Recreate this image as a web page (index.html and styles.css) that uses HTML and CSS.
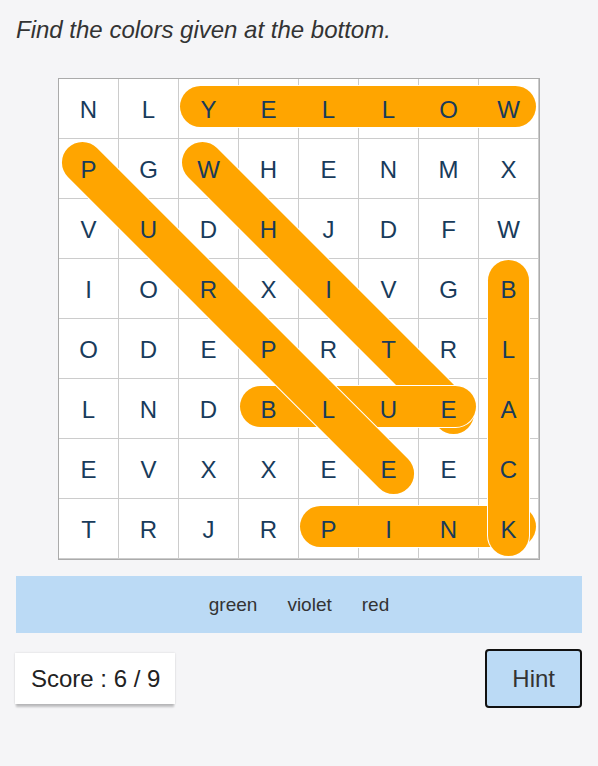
FILE: index.html
```html
<!DOCTYPE html>
<html lang="en">
<head>
<meta charset="utf-8">
<title>Word Search</title>
<link rel="stylesheet" href="styles.css">
</head>
<body>
<div class="page">
  <p class="title">Find the colors given at the bottom.</p>

  <div class="board">
    <div class="grid">
      <div class="cell"><span>N</span></div><div class="cell"><span>L</span></div><div class="cell"><span>Y</span></div><div class="cell"><span>E</span></div><div class="cell"><span>L</span></div><div class="cell"><span>L</span></div><div class="cell"><span>O</span></div><div class="cell"><span>W</span></div>
      <div class="cell"><span>P</span></div><div class="cell"><span>G</span></div><div class="cell"><span>W</span></div><div class="cell"><span>H</span></div><div class="cell"><span>E</span></div><div class="cell"><span>N</span></div><div class="cell"><span>M</span></div><div class="cell"><span>X</span></div>
      <div class="cell"><span>V</span></div><div class="cell"><span>U</span></div><div class="cell"><span>D</span></div><div class="cell"><span>H</span></div><div class="cell"><span>J</span></div><div class="cell"><span>D</span></div><div class="cell"><span>F</span></div><div class="cell"><span>W</span></div>
      <div class="cell"><span>I</span></div><div class="cell"><span>O</span></div><div class="cell"><span>R</span></div><div class="cell"><span>X</span></div><div class="cell"><span>I</span></div><div class="cell"><span>V</span></div><div class="cell"><span>G</span></div><div class="cell"><span>B</span></div>
      <div class="cell"><span>O</span></div><div class="cell"><span>D</span></div><div class="cell"><span>E</span></div><div class="cell"><span>P</span></div><div class="cell"><span>R</span></div><div class="cell"><span>T</span></div><div class="cell"><span>R</span></div><div class="cell"><span>L</span></div>
      <div class="cell"><span>L</span></div><div class="cell"><span>N</span></div><div class="cell"><span>D</span></div><div class="cell"><span>B</span></div><div class="cell"><span>L</span></div><div class="cell"><span>U</span></div><div class="cell"><span>E</span></div><div class="cell"><span>A</span></div>
      <div class="cell"><span>E</span></div><div class="cell"><span>V</span></div><div class="cell"><span>X</span></div><div class="cell"><span>X</span></div><div class="cell"><span>E</span></div><div class="cell"><span>E</span></div><div class="cell"><span>E</span></div><div class="cell"><span>C</span></div>
      <div class="cell"><span>T</span></div><div class="cell"><span>R</span></div><div class="cell"><span>J</span></div><div class="cell"><span>R</span></div><div class="cell"><span>P</span></div><div class="cell"><span>I</span></div><div class="cell"><span>N</span></div><div class="cell"><span>K</span></div>
    </div>
    <div class="mark" style="left:121px; top:7px; width:356px; height:41px;"></div>
    <div class="mark diag" style="left:269.15px; top:209.15px; width:396px;"></div>
    <div class="mark" style="left:181px; top:307px; width:236px; height:41px;"></div>
    <div class="mark diag" style="left:179.15px; top:239.15px; width:481px;"></div>
    <div class="mark" style="left:241px; top:427px; width:236px; height:41px;"></div>
    <div class="mark" style="left:429px; top:181px; width:41px; height:296px;"></div>
  </div>

  <div class="words">
    <span class="word">green</span>
    <span class="word">violet</span>
    <span class="word">red</span>
  </div>

  <div class="controls">
    <div class="score">Score : 6 / 9</div>
    <button class="hint" type="button">Hint</button>
  </div>
</div>
</body>
</html>
```

FILE: styles.css
```css
html, body {
  margin: 0;
  padding: 0;
  background: #f5f5f7;
}

.page {
  padding: 16px;
  font-family: "Liberation Sans", Arial, sans-serif;
  color: #333;
}

.title {
  margin: 0 0 34px;
  font-size: 24px;
  line-height: 28px;
  font-style: italic;
  color: #333;
}

.board {
  position: relative;
  width: 480px;
  margin: 0 auto;
  border: 1px solid #ababab;
  background: #fff;
}

.grid {
  display: grid;
  grid-template-columns: repeat(8, 60px);
  grid-auto-rows: 60px;
}

.cell {
  box-sizing: border-box;
  border-right: 1px solid #cccccc;
  border-bottom: 1px solid #cccccc;
  display: flex;
  align-items: center;
  justify-content: center;
  padding-top: 3px;
}

.cell span {
  position: relative;
  z-index: 2;
  font-size: 24px;
  line-height: 28px;
  color: #183b5b;
}

.mark {
  position: absolute;
  z-index: 1;
  background: #ffa500;
  border-radius: 21px;
  box-shadow: 0 0 0 1px #ffffff;
}

.mark.diag {
  height: 41px;
  transform: translate(-50%, -50%) rotate(45deg);
}

.words {
  margin-top: 16px;
  background: #bbdaf5;
  padding: 18px 0;
  display: flex;
  justify-content: center;
  gap: 30px;
  font-size: 19px;
  line-height: 21px;
  color: #333;
}

.controls {
  margin-top: 16px;
  display: flex;
  justify-content: space-between;
  align-items: center;
}

.score {
  margin-left: -1px;
  background: #fff;
  padding: 12px 15px 12px 16px;
  font-size: 24px;
  line-height: 27px;
  color: #222;
  box-shadow: 0 4px 2px -1px rgba(0, 0, 0, 0.22), 0 0 2px rgba(0, 0, 0, 0.12);
}

.hint {
  font-family: "Liberation Sans", Arial, sans-serif;
  font-size: 24px;
  line-height: 27px;
  color: #333;
  background: #bbdaf5;
  border: 2px solid #111;
  border-radius: 4px;
  padding: 14px 25px;
  margin: 0;
}
```
